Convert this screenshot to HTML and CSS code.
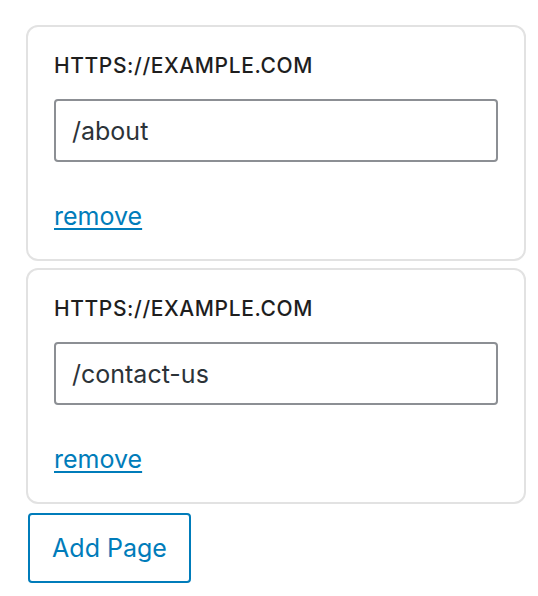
FILE: index.html
```html
<!DOCTYPE html>
<html lang="en">
<head>
    <meta charset="utf-8">
    <title>Pages</title>
    <link rel="stylesheet" href="styles.css">
</head>
<body>
    <div class="pages">
        <div class="page-card">
            <label class="page-label" for="page1">https://example.com</label>
            <input id="page1" class="page-input" type="text" value="/about">
            <a href="#" class="remove-link">remove</a>
        </div>
        <div class="page-card">
            <label class="page-label" for="page2">https://example.com</label>
            <input id="page2" class="page-input" type="text" value="/contact-us">
            <a href="#" class="remove-link">remove</a>
        </div>
        <button class="add-button" type="button">Add Page</button>
    </div>
</body>
</html>
```

FILE: styles.css
```css
body {
    margin: 0;
    background-color: #fff;
    font-family: Inter, "Noto Sans", sans-serif;
}
.pages {
    padding: 25px 0 0 26px;
    width: 500px;
    display: flex;
    flex-direction: column;
    align-items: flex-start;
    gap: 7px;
}
.page-card {
    box-sizing: border-box;
    width: 500px;
    border: 2px solid #e2e2e2;
    border-radius: 12px;
    padding: 25px 26px 27px;
    display: flex;
    flex-direction: column;
    align-items: flex-start;
}
.page-label {
    font-size: 21px;
    line-height: 28px;
    font-weight: 500;
    letter-spacing: 0.6px;
    text-transform: uppercase;
    color: #1e1e1e;
    margin-bottom: 19px;
}
.page-input {
    box-sizing: border-box;
    width: 444px;
    height: 63px;
    border: 2px solid #8c8f94;
    border-radius: 4px;
    padding: 0 16px;
    font-family: inherit;
    font-size: 25px;
    color: #2c3338;
    margin-bottom: 38px;
}
.remove-link {
    font-size: 25px;
    line-height: 32px;
    color: #007cba;
    text-decoration: underline;
    text-underline-offset: 3px;
    text-decoration-thickness: 2px;
}
.add-button {
    box-sizing: border-box;
    margin: 2px 0 0 2px;
    width: 163px;
    height: 70px;
    border: 2px solid #007cba;
    border-radius: 4px;
    background-color: #fff;
    color: #007cba;
    font-family: inherit;
    font-size: 25px;
    padding: 0;
}
```
